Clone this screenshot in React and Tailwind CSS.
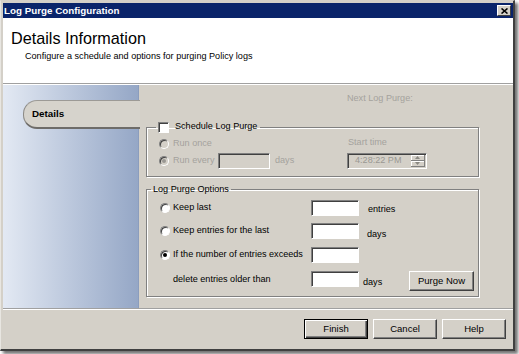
import React from "react";

const Radio = ({ checked, disabled }) => (
  <span
    className={`w-[10px] h-[10px] shrink-0 rounded-full border border-t-[#808080] border-l-[#808080] border-r-white border-b-white shadow-[inset_1px_1px_0_#404040] flex items-center justify-center ${
      disabled ? "bg-[#d4d0c8]" : "bg-white"
    }`}
  >
    {checked && (
      <span className={`w-[4px] h-[4px] rounded-full ${disabled ? "bg-[#9a9893]" : "bg-black"}`} />
    )}
  </span>
);

const Field = ({ className = "", disabled, children }) => (
  <div
    className={`h-[16px] shrink-0 border border-t-[#808080] border-l-[#808080] border-r-white border-b-white shadow-[inset_1px_1px_0_#404040] ${
      disabled ? "bg-[#d4d0c8]" : "bg-white"
    } ${className}`}
  >
    {children}
  </div>
);

const Button = ({ children, isDefault, className = "" }) => (
  <button
    className={`h-[20px] text-[9.5px] text-black bg-[#d4d0c8] ${
      isDefault
        ? "border border-black shadow-[inset_1px_1px_0_#fff,inset_-1px_-1px_0_#404040,inset_-2px_-2px_0_#808080]"
        : "border border-t-white border-l-white border-r-[#404040] border-b-[#404040] shadow-[inset_-1px_-1px_0_#808080]"
    } ${className}`}
  >
    {children}
  </button>
);

const Arrow = ({ up }) => (
  <svg width="5" height="3" viewBox="0 0 5 3">
    <path d={up ? "M0 3 L2.5 0 L5 3 Z" : "M0 0 L2.5 3 L5 0 Z"} fill="#8a8882" />
  </svg>
);

const App = () => {
  return (
    <div className="w-[519px] h-[354px] bg-white font-['Liberation_Sans',Arial,sans-serif] text-[9.1px] text-black whitespace-nowrap">
      <div className="w-[515px] h-[351px] bg-[#d4d0c8] border border-t-[#d4d0c8] border-l-[#e8e6e1] border-r-[#404040] border-b-[#404040] border-r-2 border-b-2 shadow-[3px_3px_3px_rgba(0,0,0,0.55)] p-[2px] pr-0 pb-0 flex flex-col">
        {/* Title bar */}
        <div className="h-[15px] bg-[#0a246a] flex items-center justify-between pl-[1px] pr-[2px]">
          <span className="text-white font-bold text-[9.8px] leading-none">Log Purge Configuration</span>
          <div className="w-[14px] h-[11px] bg-[#d4d0c8] border border-t-white border-l-white border-r-[#404040] border-b-[#404040] flex items-center justify-center">
            <svg width="7" height="6" viewBox="0 0 7 6">
              <path d="M0.5 0.5 L6.5 5.5 M6.5 0.5 L0.5 5.5" stroke="#000" strokeWidth="1.6" />
            </svg>
          </div>
        </div>

        {/* Header */}
        <div className="h-[65px] bg-white pl-[8px] pt-[11px] flex flex-col">
          <div className="text-[16.2px] leading-[18px] text-black">Details Information</div>
          <div className="mt-[3px] pl-[14px] text-[9.1px] leading-[12px] text-black">
            Configure a schedule and options for purging Policy logs
          </div>
        </div>
        <div className="h-[2px] border-t border-t-[#a0a0a0] border-b border-b-white" />

        {/* Main */}
        <div className="h-[223px] flex">
          <div className="w-[136px] bg-linear-to-r from-[#e3e9f3] to-[#95a7c6] border-r border-r-[#8b9dbd] pt-[15px] pl-[20px]">
            <div className="h-[29px] -mr-[2px] rounded-l-[14px] bg-[#d6d3cc] border border-r-0 border-t-[#9c9a96] border-l-[#8c8a86] border-b-2 border-b-[#6e6c69] flex items-center pl-[8px]">
              <span className="font-bold text-[9.8px]">Details</span>
            </div>
          </div>

          <div className="flex-1 flex flex-col pl-[7px]">
            <div className="pt-[7px] pl-[201px] h-[19px] leading-[12px] text-[#a4a29d]">Next Log Purge:</div>

            {/* Schedule */}
            <fieldset className="mt-[17px] w-[333px] border border-[#808080] shadow-[inset_1px_1px_0_#fff,1px_1px_0_#fff] pl-[12px] pb-[7px]">
              <legend className="-ml-[3px] px-[2px] flex items-center gap-[6px] h-[12px]">
                <span className="w-[11px] h-[11px] bg-white border border-t-[#808080] border-l-[#808080] border-r-white border-b-white shadow-[inset_1px_1px_0_#404040]" />
                <span className="pr-[1px]">Schedule Log Purge</span>
              </legend>
              <div className="flex">
                <div className="w-[188px] flex flex-col">
                  <div className="mt-[5px] h-[12px] flex items-center gap-[4px] text-[#a4a29d]">
                    <Radio disabled />
                    <span>Run once</span>
                  </div>
                  <div className="mt-[3px] h-[16px] flex items-center text-[#a4a29d]">
                    <Radio disabled checked />
                    <span className="ml-[4px] w-[45px]">Run every</span>
                    <Field disabled className="w-[52px]" />
                    <span className="ml-[5px]">days</span>
                  </div>
                </div>
                <div className="flex flex-col">
                  <div className="mt-[3px] h-[12px] leading-[12px] text-[#a4a29d] pl-[1px]">Start time</div>
                  <Field disabled className="mt-[5px] w-[80px] flex items-center justify-between pl-[7px] pr-[1px] text-[#9a9893]">
                    <span>4:28:22 PM</span>
                    <div className="w-[14px] h-[12px] flex flex-col">
                      <div className="h-[6px] bg-[#d4d0c8] border-r border-b border-r-[#808080] border-b-[#808080] shadow-[inset_1px_1px_0_#fff] flex items-center justify-center">
                        <Arrow up />
                      </div>
                      <div className="h-[6px] bg-[#d4d0c8] border-r border-b border-r-[#808080] border-b-[#808080] shadow-[inset_1px_1px_0_#fff] flex items-center justify-center">
                        <Arrow />
                      </div>
                    </div>
                  </Field>
                </div>
              </div>
            </fieldset>

            {/* Options */}
            <fieldset className="mt-[6px] w-[333px] border border-[#808080] shadow-[inset_1px_1px_0_#fff,1px_1px_0_#fff] pl-[13px] pr-[4px] pb-[9px]">
              <legend className="-ml-[9px] px-[2px] h-[12px] leading-[12px]">Log Purge Options</legend>
              <div className="mt-[5px] h-[16px] flex items-center">
                <Radio />
                <span className="ml-[3px] w-[138px]">Keep last</span>
                <Field className="w-[48px]" />
                <span className="ml-[9px] mt-[4px]">entries</span>
              </div>
              <div className="mt-[7px] h-[16px] flex items-center">
                <Radio />
                <span className="ml-[3px] w-[138px]">Keep entries for the last</span>
                <Field className="w-[48px]" />
                <span className="ml-[8px] mt-[8px]">days</span>
              </div>
              <div className="mt-[8px] h-[16px] flex items-center">
                <Radio checked />
                <span className="ml-[3px] w-[138px]">If the number of entries exceeds</span>
                <Field className="w-[48px]" />
              </div>
              <div className="mt-[8px] h-[16px] flex items-start">
                <span className="ml-[13px] w-[138px] leading-[16px]">delete entries older than</span>
                <Field className="w-[48px]" />
                <span className="ml-[4px] mt-[5px] leading-[12px]">days</span>
                <Button className="ml-auto w-[65px] h-[18px]">Purge Now</Button>
              </div>
            </fieldset>
          </div>
        </div>

        <div className="h-[2px] border-t border-t-[#a0a0a0] border-b border-b-white" />

        {/* Footer */}
        <div className="flex-1 flex justify-end items-start pt-[9px] pr-[7px] gap-[5px]">
          <Button isDefault className="w-[64px]">Finish</Button>
          <Button className="w-[64px]">Cancel</Button>
          <Button className="w-[64px]">Help</Button>
        </div>
      </div>
    </div>
  );
};

export default App;
